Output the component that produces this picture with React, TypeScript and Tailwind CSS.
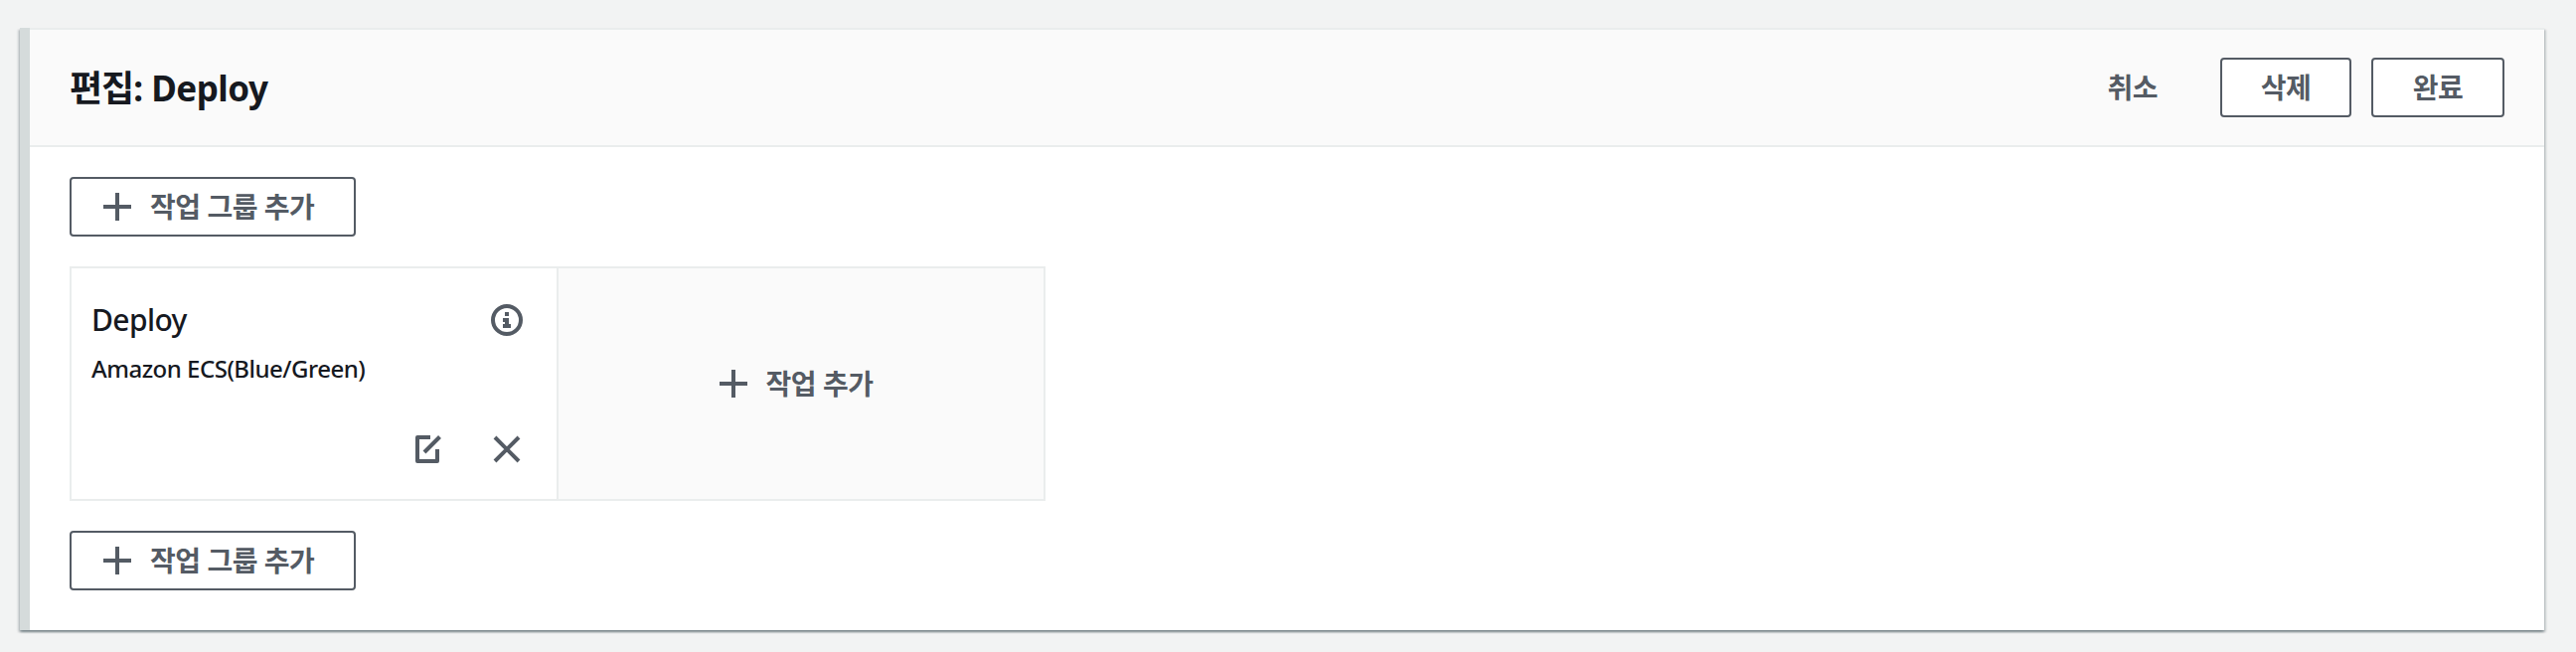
import type { ReactNode } from "react";

function PlusIcon() {
  return (
    <svg width="32" height="32" viewBox="0 0 32 32" className="shrink-0" aria-hidden="true">
      <path d="M16 2v28M2 16h28" fill="none" stroke="currentColor" strokeWidth="4" />
    </svg>
  );
}

function InfoIcon() {
  return (
    <svg width="32" height="32" viewBox="0 0 32 32" aria-hidden="true">
      <circle cx="16" cy="16" r="14" fill="none" stroke="currentColor" strokeWidth="4" />
      <path d="M14 8h4v4h-4zM12 14h6v6h2v4h-8v-4h2v-2h-2z" fill="currentColor" />
    </svg>
  );
}

function EditIcon() {
  return (
    <svg width="32" height="32" viewBox="0 0 32 32" aria-hidden="true">
      <path
        d="M19 4H6v24h20V16"
        fill="none"
        stroke="currentColor"
        strokeWidth="4"
        strokeLinejoin="round"
      />
      <path d="M13 19L28.5 3.5" fill="none" stroke="currentColor" strokeWidth="4" />
    </svg>
  );
}

function CloseIcon() {
  return (
    <svg width="32" height="32" viewBox="0 0 32 32" aria-hidden="true">
      <path d="M4 4l24 24M28 4L4 28" fill="none" stroke="currentColor" strokeWidth="4" />
    </svg>
  );
}

function Button({ className, children }: { className: string; children: ReactNode }) {
  return (
    <button
      className={`flex h-[60px] items-center rounded-[4px] border-2 border-[#545b64] bg-white text-[28px] leading-[44px] font-bold tracking-[-0.5px] text-[#545b64] ${className}`}
    >
      {children}
    </button>
  );
}

function AddGroupButton() {
  return (
    <Button className="w-[288px] gap-[17px] pl-[30px]">
      <PlusIcon />
      <span className="pb-[3px] [word-spacing:1px]">작업 그룹 추가</span>
    </Button>
  );
}

export default function App() {
  return (
    <div className="h-[656px] bg-[#f2f3f3] pt-7 pr-8 pl-5 font-['Noto_Sans_CJK_KR',sans-serif] text-[#16191f]">
      <section className="flex h-[606px] bg-white shadow-[0_2px_2px_0_rgba(0,28,36,0.3),2px_2px_2px_0_rgba(0,28,36,0.15),-2px_2px_2px_0_rgba(0,28,36,0.15)]">
        <div className="w-[10px] bg-[#d5dbdb]" />
        <div className="flex-1 border-t-2 border-[#eaeded]">
          <header className="flex h-[118px] items-center border-b-2 border-[#eaeded] bg-[#fafafa] px-10">
            <h1 className="flex-1 pb-[2px] text-[36px] leading-[44px] font-bold tracking-[-1px]">
              편집
              <span className="font-['Noto_Sans'] text-[35px] tracking-[-0.5px]">: Deploy</span>
            </h1>
            <button className="mr-[63px] h-[60px] pb-[3px] text-[28px] leading-[44px] font-bold tracking-[-0.5px] text-[#545b64]">
              취소
            </button>
            <div className="flex gap-5">
              <Button className="w-[132px] justify-center pb-[2px]">삭제</Button>
              <Button className="w-[134px] justify-center pb-[2px]">완료</Button>
            </div>
          </header>
          <main className="flex flex-col items-start gap-[30px] px-10 pt-[30px]">
            <AddGroupButton />
            <div className="flex h-[236px] w-[982px] border-2 border-[#eaeded]">
              <article className="flex w-[490px] flex-col border-r-2 border-[#eaeded] pt-[30px] pr-[34px] pl-5 font-['Noto_Sans',sans-serif] font-medium">
                <div className="flex items-center justify-between">
                  <h2 className="text-[30px] leading-[44px] tracking-[-0.6px]">Deploy</h2>
                  <span className="text-[#545b64]">
                    <InfoIcon />
                  </span>
                </div>
                <p className="mt-[7px] text-[24px] leading-[40px] tracking-[-0.5px]">
                  Amazon ECS(Blue/Green)
                </p>
                <div className="mt-[45px] flex justify-end gap-12 text-[#545b64]">
                  <EditIcon />
                  <CloseIcon />
                </div>
              </article>
              <button className="flex flex-1 items-center justify-center gap-[17px] bg-[#fafafa] pr-3 text-[28px] leading-[44px] font-bold tracking-[-0.5px] text-[#545b64]">
                <PlusIcon />
                <span className="pb-[3px] [word-spacing:1px]">작업 추가</span>
              </button>
            </div>
            <AddGroupButton />
          </main>
        </div>
      </section>
    </div>
  );
}
